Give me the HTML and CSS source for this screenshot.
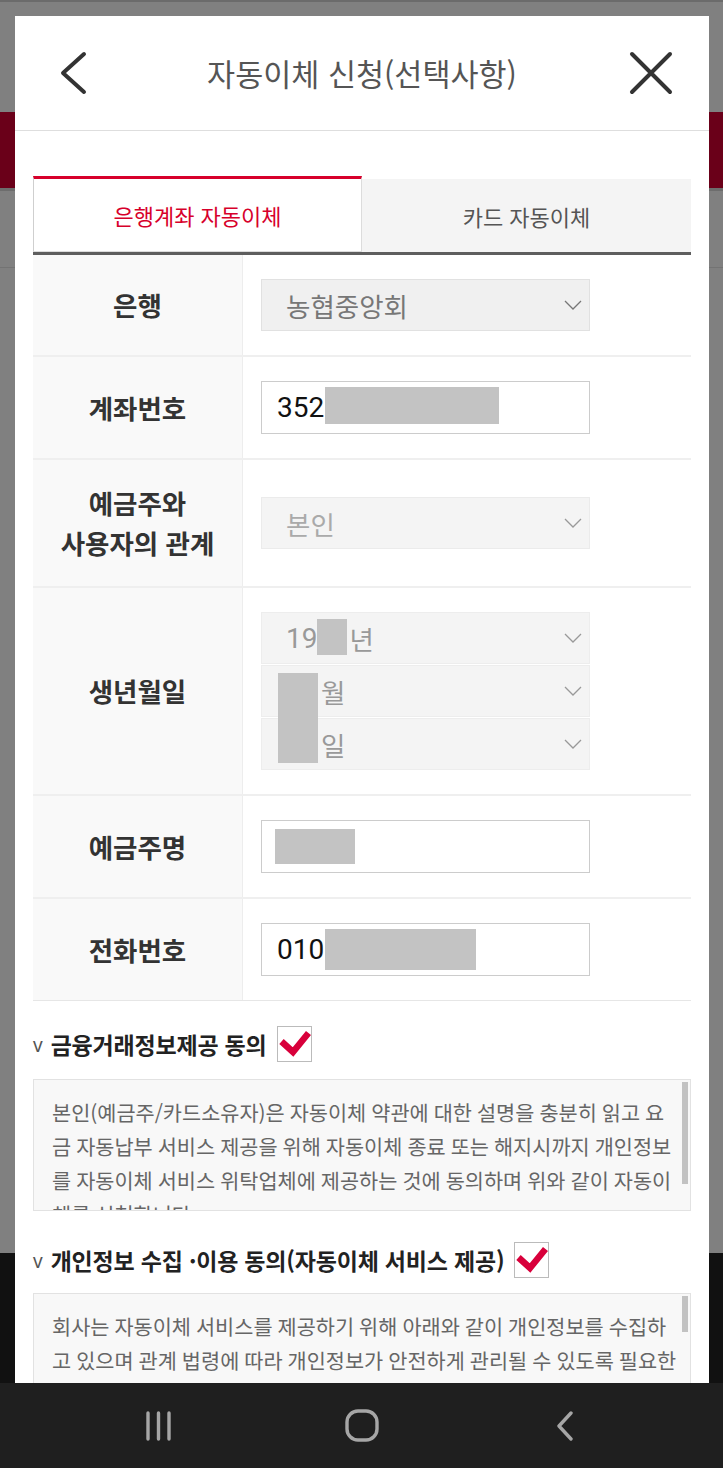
FILE: index.html
```html
<!DOCTYPE html>
<html lang="ko">
<head>
<meta charset="utf-8">
<title>자동이체 신청(선택사항)</title>
<link rel="stylesheet" href="styles.css">
</head>
<body>
<div class="screen">
  <div class="backdrop">
    <div class="bd-top"></div>
    <div class="bd-band"></div>
    <div class="bd-line"></div>
    <div class="bd-grey"></div>
    <div class="bd-rest"></div>
    <div class="bd-dark"></div>
  </div>

  <div class="stage">
    <div class="modal">
      <header class="m-header">
        <span class="hdr-btn back">
          <svg width="28" height="44" viewBox="0 0 28 44"><path d="M24 3 L3 22 L24 41" fill="none" stroke="#333" stroke-width="4" stroke-linecap="round" stroke-linejoin="round"/></svg>
        </span>
        <h1 class="m-title">자동이체 신청(선택사항)</h1>
        <span class="hdr-btn close">
          <svg width="44" height="44" viewBox="0 0 44 44"><path d="M3 3 L41 41 M41 3 L3 41" fill="none" stroke="#333" stroke-width="4" stroke-linecap="round"/></svg>
        </span>
      </header>

      <div class="m-body">
        <div class="tabs">
          <div class="tab active">은행계좌 자동이체</div>
          <div class="tab inactive">카드 자동이체</div>
        </div>

        <div class="form">
          <div class="row">
            <div class="label">은행</div>
            <div class="value">
              <div class="select bank"><span class="txt">농협중앙회</span><svg class="chev" width="18" height="10" viewBox="0 0 18 10"><path d="M1 1 L9 9 L17 1" fill="none" stroke="#777" stroke-width="1.3"/></svg></div>
            </div>
          </div>
          <div class="row">
            <div class="label">계좌번호</div>
            <div class="value">
              <div class="input"><span class="num">352</span><span class="redact r-acct"></span></div>
            </div>
          </div>
          <div class="row">
            <div class="label">예금주와<br>사용자의 관계</div>
            <div class="value">
              <div class="select"><span class="txt">본인</span><svg class="chev" width="18" height="10" viewBox="0 0 18 10"><path d="M1 1 L9 9 L17 1" fill="none" stroke="#999" stroke-width="1.3"/></svg></div>
            </div>
          </div>
          <div class="row">
            <div class="label">생년월일</div>
            <div class="value">
              <div class="birth">
                <div class="select"><span class="txt"><span class="num light">19</span><span class="redact r-year"></span>년</span><svg class="chev" width="18" height="10" viewBox="0 0 18 10"><path d="M1 1 L9 9 L17 1" fill="none" stroke="#999" stroke-width="1.3"/></svg></div>
                <div class="select"><span class="txt"><span class="gap"></span>월</span><svg class="chev" width="18" height="10" viewBox="0 0 18 10"><path d="M1 1 L9 9 L17 1" fill="none" stroke="#999" stroke-width="1.3"/></svg></div>
                <div class="select"><span class="txt"><span class="gap"></span>일</span><svg class="chev" width="18" height="10" viewBox="0 0 18 10"><path d="M1 1 L9 9 L17 1" fill="none" stroke="#999" stroke-width="1.3"/></svg></div>
                <div class="birth-cover"></div>
              </div>
            </div>
          </div>
          <div class="row">
            <div class="label">예금주명</div>
            <div class="value">
              <div class="input name"><span class="redact r-name"></span></div>
            </div>
          </div>
          <div class="row last">
            <div class="label">전화번호</div>
            <div class="value">
              <div class="input"><span class="num">010</span><span class="redact r-phone"></span></div>
            </div>
          </div>
        </div>

        <section class="agree first">
          <div class="agree-head">
            <span class="v">v</span>
            <span class="agree-title">금융거래정보제공 동의</span>
            <span class="check"><svg width="33" height="34" viewBox="0 0 33 34"><path d="M3.5 14.5 L15 25 L30.5 6" fill="none" stroke="#d8003b" stroke-width="6.5"/></svg></span>
          </div>
          <div class="terms">
            <p>본인(예금주/카드소유자)은 자동이체 약관에 대한 설명을 충분히 읽고 요<br>금 자동납부 서비스 제공을 위해 자동이체 종료 또는 해지시까지 개인정보<br>를 자동이체 서비스 위탁업체에 제공하는 것에 동의하며 위와 같이 자동이<br>체를 신청합니다.</p>
            <div class="scrollbar"></div>
          </div>
        </section>

        <section class="agree second">
          <div class="agree-head">
            <span class="v">v</span>
            <span class="agree-title">개인정보 수집 ·이용 동의(자동이체 서비스 제공)</span>
            <span class="check"><svg width="33" height="34" viewBox="0 0 33 34"><path d="M3.5 14.5 L15 25 L30.5 6" fill="none" stroke="#d8003b" stroke-width="6.5"/></svg></span>
          </div>
          <div class="terms">
            <p>회사는 자동이체 서비스를 제공하기 위해 아래와 같이 개인정보를 수집하<br>고 있으며 관계 법령에 따라 개인정보가 안전하게 관리될 수 있도록 필요한<br>조치를 하고 있습니다.</p>
            <div class="scrollbar short"></div>
          </div>
        </section>
      </div>
    </div>
  </div>

  <nav class="sysnav">
    <span class="nav-cell">
      <svg width="30" height="30" viewBox="0 0 30 30"><path d="M4 2 V28 M14.5 2 V28 M25 2 V28" stroke="#a6a6a6" stroke-width="3.4" stroke-linecap="round"/></svg>
    </span>
    <span class="nav-cell">
      <svg width="34" height="33" viewBox="0 0 34 33"><rect x="2" y="2" width="30" height="29" rx="11" fill="none" stroke="#a6a6a6" stroke-width="3.4"/></svg>
    </span>
    <span class="nav-cell">
      <svg width="20" height="30" viewBox="0 0 20 30"><path d="M16 2 L4 15 L16 28" fill="none" stroke="#a6a6a6" stroke-width="3.4" stroke-linecap="round" stroke-linejoin="round"/></svg>
    </span>
  </nav>
</div>
</body>
</html>
```

FILE: styles.css
```css
* { box-sizing: border-box; margin: 0; padding: 0; }

html, body {
  width: 723px;
  height: 1468px;
  overflow: hidden;
}

body {
  font-family: "Noto Sans CJK KR", "Noto Sans", sans-serif;
  background: #808080;
}

.screen {
  position: relative;
  width: 723px;
  height: 1468px;
  overflow: hidden;
  display: flex;
  flex-direction: column;
}

/* page behind the dialog */
.backdrop {
  position: absolute;
  inset: 0;
  display: flex;
  flex-direction: column;
}
.bd-top { height: 112px; background: #808080; border-top: 2px solid #6b6b6b; }
.bd-band { height: 76px; background: #6a0019; }
.bd-line { height: 3px; background: #6d6d6d; }
.bd-grey { height: 77px; background: #808080; border-bottom: 1px solid #737373; }
.bd-rest { height: 985px; background: #808080; }
.bd-dark { flex: 1; background: #111111; }

.stage {
  position: relative;
  flex: 1;
}

.modal {
  position: absolute;
  left: 15px;
  top: 16px;
  right: 14px;
  bottom: 0;
  background: #fff;
  overflow: hidden;
}

/* header */
.m-header {
  height: 115px;
  border-bottom: 1px solid #dedede;
  display: grid;
  grid-template-columns: 1fr auto 1fr;
  align-items: center;
}
.hdr-btn svg { display: block; }
.back { justify-self: start; margin-left: 45px; }
.close { justify-self: end; margin-right: 36px; }
.m-title {
  font-size: 30.5px;
  font-weight: 400;
  color: #555;
  white-space: nowrap;
}

.m-body {
  padding: 45px 18px 0 18px;
}

/* tabs */
.tabs {
  display: flex;
  align-items: flex-end;
  height: 79px;
  border-bottom: 3px solid #5e5e5e;
}
.tab {
  display: flex;
  align-items: center;
  justify-content: center;
  font-size: 22px;
  color: #555;
}
.tab.active {
  flex: 0 0 329px;
  height: 76px;
  background: #fff;
  border-top: 3px solid #d7002b;
  border-left: 1px solid #cfcfcf;
  border-right: 1px solid #dcdcdc;
  border-bottom: 1px solid #dcdcdc;
  color: #d7002b;
}
.tab.inactive {
  flex: 1;
  height: 73px;
  background: #f4f4f4;
}

/* form table */
.row {
  display: flex;
  border-bottom: 2px solid #efefef;
}
.row.last { border-bottom-width: 1px; border-bottom-color: #e6e6e6; }
.label {
  flex: 0 0 210px;
  background: #f9f9f9;
  border-right: 1px solid #ededed;
  display: flex;
  align-items: center;
  justify-content: center;
  text-align: center;
  padding: 23px 0;
  font-size: 26.5px;
  font-weight: 700;
  line-height: 40px;
  color: #333;
}
.value {
  flex: 1;
  padding: 24px 18px;
  display: flex;
  flex-direction: column;
  justify-content: center;
}
.select {
  width: 329px;
  height: 52px;
  display: flex;
  align-items: center;
  padding: 0 7px 0 24px;
  background: #f4f4f4;
  border: 1px solid #ebebeb;
  font-size: 26.5px;
  color: #aaa;
}
.select .txt {
  flex: 1;
  display: flex;
  align-items: center;
  white-space: nowrap;
}
.select.bank {
  background: #f0f0f0;
  border-color: #e1e1e1;
  color: #777;
}
.chev { display: block; flex: none; }

.input {
  width: 329px;
  height: 53px;
  display: flex;
  align-items: center;
  padding-left: 15px;
  background: #fff;
  border: 1px solid #cccccc;
}
.input.name { padding-left: 13px; }

.num {
  font-family: Roboto, "Noto Sans", sans-serif;
  font-size: 28px;
  color: #111;
}
.num.light { color: #999; }

.redact { display: inline-block; background: #c3c3c3; flex: none; }
.r-acct { width: 174px; height: 37px; margin-left: 1px; margin-top: -4px; }
.r-phone { width: 151px; height: 41px; margin-left: 1px; }
.r-name { width: 80px; height: 35px; margin-top: -1px; }
.r-year { width: 30px; height: 36px; margin: -3px 2px 0 0; }

.birth {
  position: relative;
  width: 329px;
  display: flex;
  flex-direction: column;
  gap: 1px;
}
.birth .select { border-color: #ededed; color: #999; }
.gap { display: inline-block; width: 35px; }
.birth-cover {
  position: absolute;
  left: 17px;
  top: 61px;
  width: 40px;
  height: 90px;
  background: #c3c3c3;
}

/* agreements */
.agree-head {
  display: flex;
  align-items: center;
  height: 36px;
  margin-top: 25px;
}
.agree.second .agree-head { margin-top: 31px; }
.v {
  font-family: "Noto Sans", sans-serif;
  font-size: 19px;
  color: #555;
  margin-right: 8px;
  line-height: 1;
  padding-top: 2px;
}
.agree-title {
  font-size: 23px;
  font-weight: 700;
  color: #222;
  white-space: nowrap;
  letter-spacing: -0.2px;
}
.check {
  width: 35px;
  height: 36px;
  margin-left: 10px;
  border: 1px solid #bbbbbb;
  background: #fff;
}
.check svg { display: block; }

.terms {
  position: relative;
  margin-top: 17px;
  height: 132px;
  background: #f8f8f8;
  border: 1px solid #e2e2e2;
  padding: 15px 4px 0 18px;
  overflow: hidden;
  font-size: 20.8px;
  line-height: 34px;
  word-spacing: -0.8px;
  color: #666;
  white-space: nowrap;
}
.agree.second .terms { margin-top: 15px; }
.scrollbar {
  position: absolute;
  right: 2px;
  top: 2px;
  width: 6px;
  height: 102px;
  background: #c2c2c2;
}
.scrollbar.short { height: 36px; }

/* system navigation bar */
.sysnav {
  position: relative;
  height: 85px;
  background: #1f1f1f;
  display: grid;
  grid-template-columns: repeat(3, 203px);
  justify-content: center;
  align-items: center;
}
.nav-cell {
  display: flex;
  justify-content: center;
  align-items: center;
}
.nav-cell svg { display: block; }
```
